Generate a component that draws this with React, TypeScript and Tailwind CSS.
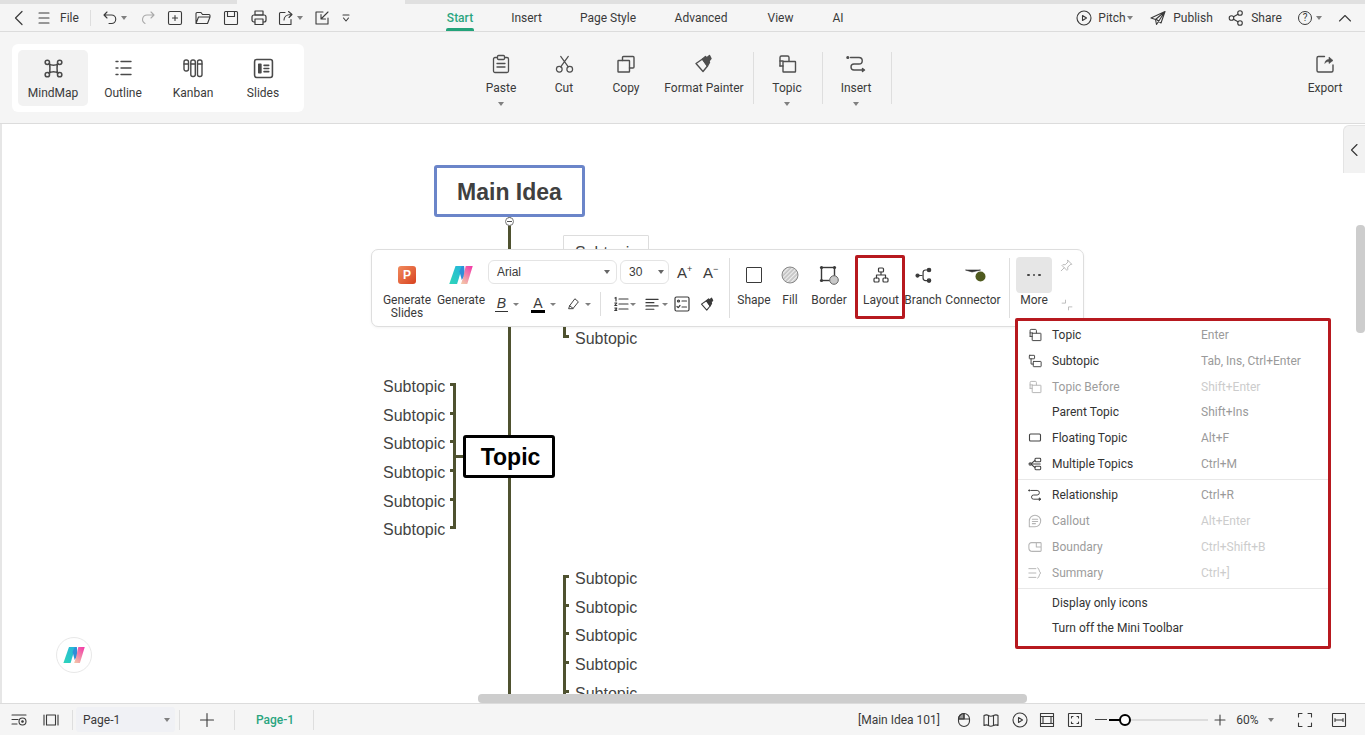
import type { ReactNode } from 'react';

const Ic = ({ size = 16, box = 16, sw = 1.1, children }: { size?: number; box?: number; sw?: number; children: ReactNode }) => (
  <svg
    width={size}
    height={size}
    viewBox={`0 0 ${box} ${box}`}
    fill="none"
    stroke="currentColor"
    strokeWidth={sw}
    strokeLinecap="round"
    strokeLinejoin="round"
    className="shrink-0"
  >
    {children}
  </svg>
);

const Caret = () => <span className="block h-0 w-0 shrink-0 border-x-[3.5px] border-t-[4px] border-x-transparent border-t-[#808080]" />;
const SmallCaret = () => <span className="block h-0 w-0 shrink-0 border-x-[3px] border-t-[3px] border-x-transparent border-t-[#808080]" />;
const SelectCaret = () => <span className="block h-0 w-0 shrink-0 border-x-[3.5px] border-t-[4px] border-x-transparent border-t-[#666666]" />;

// ribbon and mini toolbar drawings
const TopicIcon = ({ size = 20 }: { size?: number }) => (
  <Ic size={size} box={20} sw={1.4}>
    <path d="M3 12V3.500A1.500 1.500 0 0 1 4.500 2h6A1.500 1.500 0 0 1 12 3.500V7" />
    <rect x="6" y="7.500" width="12.500" height="10.500" rx="0.500" />
    <path d="M3 7h3M3 12h3" />
  </Ic>
);
const SubtopicIcon = () => (
  <Ic size={14} box={16}>
    <rect x="1.500" y="1.500" width="6" height="4" rx="0.500" />
    <rect x="6" y="8.500" width="9" height="6" rx="0.500" />
    <path d="M3.500 5.500V11.500H6" />
  </Ic>
);
const RelationIcon = ({ size = 20 }: { size?: number }) => (
  <Ic size={size} box={20} sw={1.4}>
    <circle cx="1.800" cy="3.500" r="0.900" fill="currentColor" />
    <path d="M4.500 3.500h8.500a3 3 0 0 1 0 6.500H8a3 3 0 0 0 0 6h9" />
    <path d="M16.500 14.500l2 1.500-2 1.500z" fill="currentColor" />
  </Ic>
);
const PainterIcon = ({ size = 20 }: { size?: number }) => (
  <Ic size={size} box={20} sw={1.4}>
    <path d="M2 9.500l6.500-4.500 5 7-4.500 5.500z" />
    <path d="M8.500 5l3-2.500 1 1.500 3-2.500 1.500 3-2 2.500 0.500 1.500-2 3.500z" fill="currentColor" />
  </Ic>
);
const LogoM = ({ size = 26, id }: { size?: number; id: string }) => (
  <svg width={size} height={size * 0.75} viewBox="0 0 30 23" className="shrink-0">
    <defs>
      <linearGradient id={`${id}a`} x1="0" y1="1" x2="1" y2="0">
        <stop offset="0" stopColor="#2ed6b8" />
        <stop offset="1" stopColor="#25b4dc" />
      </linearGradient>
      <linearGradient id={`${id}b`} x1="0.800" y1="0" x2="0.200" y2="1">
        <stop offset="0" stopColor="#f23fa8" />
        <stop offset="1" stopColor="#f3c4a8" />
      </linearGradient>
    </defs>
    <path d="M0 23L8 0h9L10 23z" fill={`url(#${id}a)`} />
    <path d="M13 7l3-7h3l1 12-4 6z" fill="#2f8fd8" />
    <path d="M21 0h9l-7 23h-8l3-9z" fill={`url(#${id}b)`} />
  </svg>
);

const Sep = ({ className }: { className: string }) => <div className={`w-px shrink-0 bg-[#dedede] ${className}`} />;

function TopBar() {
  return (
    <div className="flex h-[28px] shrink-0 items-center border-b border-[#dcdcdc] bg-[#f5f5f5] text-[#3a3a3a]">
      <span className="ml-[11px]"><Ic sw={1.2}><path d="M11 1.500L4.500 8l6.500 6.500" /></Ic></span>
      <span className="ml-[9px]"><Ic><path d="M3 3h10M3 8h10M3 13h10" /></Ic></span>
      <span className="ml-[8px] w-[18px]">File</span>
      <Sep className="ml-[12px] h-[16px]" />
      <span className="ml-[11px]"><Ic><path d="M5 2L2 5l3 3M2 5h7.500a4 4 0 0 1 0 8.500H7" /></Ic></span>
      <span className="ml-[3px]"><Caret /></span>
      <span className="ml-[13px] text-[#aaaaaa]"><Ic><path d="M11 2l3 3-3 3M14 5H7a4.500 4.500 0 0 0-2 8.500" /></Ic></span>
      <span className="ml-[11px]"><Ic><rect x="1.500" y="1.500" width="13" height="13" rx="1.500" /><path d="M8 5.500v5M5.500 8h5" /></Ic></span>
      <span className="ml-[12px]"><Ic><path d="M1 13V3.500A1 1 0 0 1 2 2.500h4l1.500 2H14a1 1 0 0 1 1 1v1M1 13.500h11.500l2.500-6.500H3.500L1 13.500z" /></Ic></span>
      <span className="ml-[12px]"><Ic><rect x="1.500" y="1.500" width="13" height="13" rx="1" /><path d="M4.500 1.500v5h7v-5" /></Ic></span>
      <span className="ml-[12px]"><Ic sw={1.2}><rect x="4" y="1" width="8" height="4" /><rect x="1" y="5" width="14" height="7" rx="2" /><rect x="4" y="9" width="8" height="5.500" fill="#f5f5f5" /></Ic></span>
      <span className="ml-[11px]"><Ic><path d="M7 2.500H2.500a1 1 0 0 0-1 1v10a1 1 0 0 0 1 1h10.500v-5" /><path d="M6 10c0-3 2.500-5.500 7-5.500M10.500 1.500L14 4.500l-3 3" /></Ic></span>
      <span className="ml-[3px]"><Caret /></span>
      <span className="ml-[11px]"><Ic><path d="M9 2H2v12h12V8M14 2L7.500 8.500M7 4.500v4.500h4.500" /></Ic></span>
      <span className="ml-[8px]"><Ic><path d="M5 5h6M5.500 8L8 11l2.500-3" /></Ic></span>

      <div className="relative ml-[92px] flex h-full w-[28px] items-center justify-center whitespace-nowrap font-medium text-[#2aa57f]">
        Start
        <span className="absolute bottom-0 h-[3px] w-full rounded-t-[2px] bg-[#22a37a]" />
      </div>
      <span className="ml-[38px] flex w-[29px] justify-center whitespace-nowrap">Insert</span>
      <span className="ml-[40px] flex w-[54px] justify-center whitespace-nowrap">Page Style</span>
      <span className="ml-[40px] flex w-[52px] justify-center whitespace-nowrap">Advanced</span>
      <span className="ml-[41px] flex w-[25px] justify-center whitespace-nowrap">View</span>
      <span className="ml-[40px] flex w-[10px] justify-center whitespace-nowrap">AI</span>

      <span className="ml-[233px]"><Ic><circle cx="8" cy="8" r="7" /><path d="M6.500 5.500l4 2.500-4 2.500z" /></Ic></span>
      <span className="ml-[8px] flex w-[24px] justify-center whitespace-nowrap">Pitch</span>
      <span className="ml-[3px]"><Caret /></span>
      <span className="ml-[17px]"><Ic><path d="M15 1.500L1 8l4.500 1.500 1 5L15 1.500zM15 1.500L5.500 9.500M15 1.500l-4 11.500-4.500-3.500" /></Ic></span>
      <span className="ml-[8px] flex w-[38px] justify-center whitespace-nowrap">Publish</span>
      <span className="ml-[16px]"><Ic><circle cx="3.500" cy="8" r="2.300" /><circle cx="12" cy="3" r="2.300" /><circle cx="12" cy="13" r="2.300" /><path d="M5.500 6.800l4.500-2.600M5.500 9.200l4.500 2.600" /></Ic></span>
      <span className="ml-[8px] flex w-[29px] justify-center whitespace-nowrap">Share</span>
      <span className="ml-[16px] flex h-[14px] w-[16px] items-center justify-center rounded-full">
        <span className="flex h-[14px] w-[14px] items-center justify-center rounded-full border border-[#3a3a3a] text-[10px] leading-none">?</span>
      </span>
      <span className="ml-[3px]"><Caret /></span>
      <span className="ml-[15px]"><Ic><path d="M2.500 11L8 5.500 13.500 11" /></Ic></span>
    </div>
  );
}

const ModeTab = ({ label, active, children }: { label: string; active?: boolean; children: ReactNode }) => (
  <div className={`flex h-[56px] w-[70px] flex-col items-center rounded-[5px] pt-[8px] text-[#3a3a3a] ${active ? 'bg-[#f2f2f2]' : ''}`}>
    <div className="flex h-[20px] items-center justify-center text-[#4a4a4a]">{children}</div>
    <span className="mt-[7px] leading-[16px]">{label}</span>
  </div>
);

const RibbonBtn = ({ label, width, caret, children }: { label: string; width: string; caret?: boolean; children: ReactNode }) => (
  <div className={`flex shrink-0 flex-col items-center pt-[22px] text-[#3a3a3a] ${width}`}>
    <div className="flex h-[20px] items-center justify-center text-[#4f4f4f]">{children}</div>
    <span className="mt-[6px] whitespace-nowrap leading-[16px]">{label}</span>
    {caret && <span className="mt-[6px]"><Caret /></span>}
  </div>
);

function Ribbon() {
  return (
    <div className="flex h-[92px] shrink-0 items-start border-b border-[#dcdcdc] bg-[#f5f5f5]">
      <div className="ml-[12px] mt-[12px] flex h-[68px] w-[292px] shrink-0 rounded-[6px] bg-white p-[6px]">
        <ModeTab label="MindMap" active>
          <Ic size={19} box={20} sw={1.6}>
            <circle cx="3.500" cy="3.500" r="2.300" /><circle cx="16.500" cy="3.500" r="2.300" /><circle cx="3.500" cy="16.500" r="2.300" /><circle cx="16.500" cy="16.500" r="2.300" />
            <path d="M5.500 5c2 2 7 2 9 0M5.500 15c2-2 7-2 9 0M5.500 5c1 2 1 8 0 10M14.500 5c-1 2-1 8 0 10" />
          </Ic>
        </ModeTab>
        <ModeTab label="Outline">
          <Ic size={20} box={20} sw={1.4}>
            <path d="M3 3.500h2M8 3.500h10M3 10h2M8 10h10M3 16.500h2M8 16.500h10" />
          </Ic>
        </ModeTab>
        <ModeTab label="Kanban">
          <Ic size={20} box={20} sw={1.4}>
            <rect x="1" y="2" width="4.500" height="11" rx="2" /><rect x="7.800" y="2" width="4.500" height="16.500" rx="2" /><rect x="14.500" y="2" width="4.500" height="16.500" rx="2" />
            <path d="M1 6h4.500M7.800 6h4.500M14.500 6h4.500" />
          </Ic>
        </ModeTab>
        <ModeTab label="Slides">
          <Ic size={21} box={20} sw={1.5}>
            <rect x="1.500" y="1.500" width="17" height="17" rx="2" />
            <rect x="5.500" y="6" width="2" height="8" fill="currentColor" />
            <path d="M10.500 7h4.500M10.500 13h4.500M10.500 10h4.500" />
          </Ic>
        </ModeTab>
      </div>

      <div className="ml-[166px]">
        <RibbonBtn label="Paste" width="w-[62px]" caret>
          <Ic size={20} box={20} sw={1.3}>
            <rect x="2.500" y="3.500" width="15" height="15" rx="1.500" /><rect x="6.500" y="1.500" width="7" height="4" rx="1" fill="#f5f5f5" /><path d="M6 9.500h8M6 13h8" />
          </Ic>
        </RibbonBtn>
      </div>
      <div className="ml-[1px]">
        <RibbonBtn label="Cut" width="w-[62px]">
          <Ic size={19} box={20} sw={1.3}>
            <circle cx="4.500" cy="15" r="3" /><circle cx="15.500" cy="15" r="3" /><path d="M6 12.500L14 1.500M14 12.500L6 1.500" />
          </Ic>
        </RibbonBtn>
      </div>
      <RibbonBtn label="Copy" width="w-[62px]">
        <Ic size={20} box={20} sw={1.4}>
          <rect x="2" y="6.500" width="11.500" height="11.500" rx="0.500" /><path d="M6.500 6.500V3.500a1 1 0 0 1 1-1H17a1 1 0 0 1 1 1V13a1 1 0 0 1-1 1h-3.500" />
        </Ic>
      </RibbonBtn>
      <div className="ml-[2px]">
        <RibbonBtn label="Format Painter" width="w-[90px]"><PainterIcon /></RibbonBtn>
      </div>
      <Sep className="ml-[4px] mt-[20px] h-[52px]" />
      <div className="ml-[3px]">
        <RibbonBtn label="Topic" width="w-[60px]" caret><TopicIcon /></RibbonBtn>
      </div>
      <Sep className="ml-[5px] mt-[20px] h-[52px]" />
      <div className="ml-[3px]">
        <RibbonBtn label="Insert" width="w-[60px]" caret><RelationIcon /></RibbonBtn>
      </div>
      <Sep className="ml-[5px] mt-[20px] h-[52px]" />
      <div className="ml-[403px]">
        <RibbonBtn label="Export" width="w-[60px]">
          <Ic size={20} box={20} sw={1.4}>
            <path d="M9.500 2.500H3.500a1.500 1.500 0 0 0-1.500 1.500v12.500a1.500 1.500 0 0 0 1.500 1.500h13a1.500 1.500 0 0 0 1.500-1.500V11" />
            <path d="M10 9c0-2 1.500-3.500 4-3.500V3l4 3.500-4 3V7.500c-2 0-3 .5-4 1.500z" fill="currentColor" strokeWidth="0.600" />
          </Ic>
        </RibbonBtn>
      </div>
    </div>
  );
}

const Sub = () => <span className="whitespace-nowrap font-['Liberation_Sans',sans-serif] text-[16px] text-[#444444]">Subtopic</span>;

function MindMap() {
  return (
    <>
      {/* spine */}
      <div className="absolute left-[508px] top-[93px] h-[486px] w-[3px] bg-[#4f5230]" />

      <div className="absolute left-[434px] top-[41px] flex h-[52px] w-[151px] items-center justify-center rounded-[3px] border-[3px] border-[#6b85c9] bg-white pt-[2px] font-['Liberation_Sans',sans-serif] text-[23px] font-bold text-[#404040]">
        Main Idea
      </div>
      <div className="absolute left-[505px] top-[93px] flex h-[9px] w-[9px] items-center justify-center rounded-full border border-[#777777] bg-white">
        <span className="h-px w-[5px] bg-[#555555]" />
      </div>

      {/* subtopics right of the spine, upper */}
      <div className="absolute left-[563px] top-[111px] flex h-[36px] w-[86px] items-center rounded-[1px] border border-[#dddddd] bg-white pl-[11px]">
        <Sub />
      </div>
      <div className="absolute left-[563px] top-[200px] h-[14px] w-[3px] bg-[#4f5230]" />
      <div className="absolute left-[563px] top-[211px] h-[3px] w-[6px] bg-[#4f5230]" />
      <div className="absolute left-[575px] top-[203px]"><Sub /></div>

      {/* left group */}
      <div className="absolute left-[383px] top-[246px] flex flex-col">
        {[0, 1, 2, 3, 4, 5].map((i) => (
          <div key={i} className="flex h-[28.7px] items-center">
            <span className="w-[63px] pt-[5px]"><Sub /></span>
            <span className="ml-[4px] h-[3px] w-[6px] bg-[#4f5230]" />
          </div>
        ))}
        <div className="absolute left-[70px] top-[13px] h-[145px] w-[3px] bg-[#4f5230]" />
      </div>
      <div className="absolute left-[456px] top-[331px] h-[3px] w-[8px] bg-[#4f5230]" />
      <div className="absolute left-[463px] top-[311px] flex h-[43px] w-[92px] items-center justify-center rounded-[3px] border-[3px] border-black bg-white pl-[3px] pt-[2px] font-['Liberation_Sans',sans-serif] text-[23px] font-bold text-black">
        Topic
      </div>

      {/* lower group */}
      <div className="absolute left-[563px] top-[438px] flex flex-col">
        {[0, 1, 2, 3, 4].map((i) => (
          <div key={i} className="flex h-[28.700px] items-center">
            <span className="h-[3px] w-[6px] bg-[#4f5230]" />
            <span className="ml-[6px] pt-[5px]"><Sub /></span>
          </div>
        ))}
        <div className="absolute left-0 top-[13px] h-[130px] w-[3px] bg-[#4f5230]" />
      </div>
    </>
  );
}

const ToolCol = ({ label, width, children }: { label: string; width: string; children: ReactNode }) => (
  <div className={`flex shrink-0 flex-col items-center pt-[15px] text-[#3a3a3a] ${width}`}>
    <div className="flex h-[20px] items-center justify-center">{children}</div>
    <span className="mt-[9px] whitespace-nowrap text-center leading-[13px]">{label}</span>
  </div>
);

function MiniToolbar() {
  return (
    <div className="absolute left-[371px] top-[125px] flex h-[78px] w-[713px] items-start rounded-[7px] border border-[#dedede] bg-white text-[#3a3a3a] shadow-[0_1px_3px_rgba(0,0,0,0.05)]">
      <div className="ml-[6px] flex w-[58px] shrink-0 flex-col items-center pt-[15px]">
        <div className="flex h-[20px] items-center">
          <span className="flex h-[18px] w-[18px] items-center justify-center rounded-[3px] bg-gradient-to-br from-[#f08a5d] to-[#d83f1c] font-['Liberation_Sans',sans-serif] text-[12px] font-bold text-white">P</span>
        </div>
        <span className="mt-[9px] whitespace-pre-line text-center leading-[13px]">{'Generate\nSlides'}</span>
      </div>
      <div className="flex w-[50px] shrink-0 flex-col items-center pt-[15px]">
        <div className="flex h-[20px] items-center"><LogoM size={24} id="tb" /></div>
        <span className="mt-[9px] leading-[13px]">Generate</span>
      </div>

      <div className="ml-[2px] flex w-[241px] shrink-0 flex-col pt-[10px]">
        <div className="flex h-[24px] items-center">
          <div className="flex h-[24px] w-[129px] items-center justify-between rounded-[6px] border border-[#e4e4e4] pl-[8px] pr-[6px] font-['Liberation_Sans',sans-serif]">
            Arial <SelectCaret />
          </div>
          <div className="ml-[3px] flex h-[24px] w-[49px] items-center justify-between rounded-[6px] border border-[#e4e4e4] pl-[8px] pr-[4px] font-['Liberation_Sans',sans-serif]">
            30 <SelectCaret />
          </div>
          <span className="ml-[8px] flex w-[16px] items-start font-['Liberation_Sans',sans-serif] text-[15px] leading-none">A<span className="text-[9px] leading-none">+</span></span>
          <span className="ml-[10px] flex w-[16px] items-start font-['Liberation_Sans',sans-serif] text-[15px] leading-none">A<span className="text-[9px] leading-none">−</span></span>
        </div>
        <div className="mt-[6px] flex h-[28px] items-center">
          <span className="relative ml-[7px] w-[13px] border-b border-[#333333] text-center font-['Liberation_Sans',sans-serif] text-[14px] italic leading-[15px]">B</span>
          <span className="ml-[5px]"><SmallCaret /></span>
          <span className="ml-[12px] w-[14px] border-b-[3px] border-black text-center font-['Liberation_Sans',sans-serif] text-[14px] leading-[14px]">A</span>
          <span className="ml-[5px]"><SmallCaret /></span>
          <span className="ml-[11px]"><Ic size={14}><path d="M2 13l1-3 6-8 4 3.500-6 7.500z" /><path d="M3 10l4 3" /></Ic></span>
          <span className="ml-[4px]"><SmallCaret /></span>
          <Sep className="ml-[9px] h-[24px]" />
          <span className="ml-[12px]"><Ic size={16} sw={1.2}><path d="M6 3h9M6 8h9M6 13h9M2 2l1-.5v3.500M1.800 7h2l-2 2.500h2M1.800 12h2l-1 1.200 1 1.200h-2" /></Ic></span>
          <span className="ml-[1px]"><SmallCaret /></span>
          <span className="ml-[9px]"><Ic size={15} sw={1.2}><path d="M1 2.500h13M1 6h8.500M1 9.500h13M1 13h8.500" /></Ic></span>
          <span className="ml-[2px]"><SmallCaret /></span>
          <span className="ml-[6px]"><Ic size={16} sw={1.2}><rect x="1" y="1" width="14" height="14" rx="1.500" /><circle cx="4.500" cy="5" r="1" /><path d="M8 5h4.500M3 10.500l1.200 1.200L6 9.500M8 11h4.500" /></Ic></span>
          <span className="ml-[10px]"><PainterIcon size={15} /></span>
        </div>
      </div>

      <Sep className="mt-[8px] h-[60px]" />

      <div className="ml-[4px]">
        <ToolCol label="Shape" width="w-[40px]">
          <span className="block h-[16px] w-[16px] rounded-[1px] border-[1.5px] border-[#3a3a3a]" />
        </ToolCol>
      </div>
      <ToolCol label="Fill" width="w-[32px]">
        <svg width="18" height="18" viewBox="0 0 18 18">
          <defs>
            <pattern id="hatch" width="3" height="3" patternUnits="userSpaceOnUse" patternTransform="rotate(45)">
              <rect width="3" height="3" fill="#c4c4c4" />
              <rect width="1.200" height="3" fill="#efefef" />
            </pattern>
          </defs>
          <circle cx="9" cy="9" r="8" fill="url(#hatch)" stroke="#888888" strokeWidth="1" />
        </svg>
      </ToolCol>
      <ToolCol label="Border" width="w-[46px]">
        <svg width="20" height="20" viewBox="0 0 20 20" fill="none">
          <rect x="2.500" y="2.500" width="13" height="13" stroke="#3a3a3a" strokeWidth="1.400" />
          <circle cx="2.500" cy="2.500" r="1.600" fill="#3a3a3a" /><circle cx="15.500" cy="2.500" r="1.600" fill="#3a3a3a" /><circle cx="2.500" cy="15.500" r="1.600" fill="#3a3a3a" />
          <circle cx="15" cy="15" r="4.300" fill="#c8c8c8" stroke="#666666" />
        </svg>
      </ToolCol>

      <div className="ml-[3px] mt-[5px] flex h-[64px] w-[50px] shrink-0 flex-col items-center rounded-[2px] border-[3px] border-[#b7191f] pl-[2px] pt-[7px]">
        <div className="flex h-[20px] items-center">
          <Ic size={16} sw={1.2}>
            <rect x="5.500" y="1" width="5" height="4" rx="1" /><rect x="1" y="11" width="5" height="4" rx="1" /><rect x="10" y="11" width="5" height="4" rx="1" />
            <path d="M8 5v3M3.500 11V8h9v3" />
          </Ic>
        </div>
        <span className="mt-[9px] whitespace-nowrap leading-[13px]">Layout</span>
      </div>

      <ToolCol label="Branch" width="w-[36px]">
        <Ic size={17} box={20} sw={1.4}>
          <circle cx="3" cy="10" r="1.800" fill="currentColor" /><circle cx="16.500" cy="3.500" r="2" fill="currentColor" /><circle cx="16.500" cy="16" r="2" fill="currentColor" />
          <path d="M3 10h5M15 3.500h-2.500a3 3 0 0 0-3 3v6.500a3 3 0 0 0 3 3H15" />
        </Ic>
      </ToolCol>
      <ToolCol label="Connector" width="w-[64px]">
        <svg width="21" height="14" viewBox="0 0 21 14" className="translate-x-[2px]">
          <path d="M0.500 2h15L7 4z" fill="#333333" stroke="#333333" strokeWidth="0.600" />
          <circle cx="15.500" cy="8.500" r="5" fill="#4f5a1e" />
        </svg>
      </ToolCol>

      <Sep className="ml-[4px] mt-[8px] h-[60px]" />

      <div className="ml-[6px] flex w-[36px] shrink-0 flex-col items-center pt-[7px]">
        <div className="flex h-[36px] w-[36px] items-center justify-center gap-[3px] rounded-[4px] bg-[#e6e6e6]">
          <span className="h-[2.500px] w-[2.500px] rounded-full bg-[#444444]" />
          <span className="h-[2.500px] w-[2.500px] rounded-full bg-[#444444]" />
          <span className="h-[2.500px] w-[2.500px] rounded-full bg-[#444444]" />
        </div>
        <span className="mt-[1px] leading-[13px]">More</span>
      </div>

      <div className="ml-[8px] flex flex-col items-center pt-[9px] text-[#aaaaaa]">
        <Ic size={13} sw={1}><path d="M9.500 1.500l5 5-2 .5-3 3 0 3-1 1-6-6 1-1 3 0 3-3zM5 11l-3.500 3.500" /></Ic>
        <span className="mt-[27px]"><Ic size={12} sw={1}><path d="M6 1.500V5.500H1.500M10 14.500V10.500H14.500" /></Ic></span>
      </div>
    </div>
  );
}

const MenuRow = ({ label, keys, off, h, children }: { label: string; keys?: string; off?: boolean; h: string; children?: ReactNode }) => (
  <div className={`flex items-center ${h}`}>
    <span className={`ml-[9px] flex w-[16px] justify-center ${off ? 'text-[#b5b5b5]' : 'text-[#444444]'}`}>{children}</span>
    <span className={`ml-[9px] w-[149px] whitespace-nowrap ${off ? 'text-[#9c9c9c]' : 'text-[#333333]'}`}>{label}</span>
    {keys && <span className={`whitespace-nowrap ${off ? 'text-[#cccccc]' : 'text-[#9a9a9a]'}`}>{keys}</span>}
  </div>
);

function ContextMenu() {
  return (
    <div className="absolute left-[1015px] top-[194px] h-[331px] w-[316px] rounded-[2px] border-[3px] border-[#b7191f] bg-white pt-[1.500px]">
      <MenuRow label="Topic" keys="Enter" h="h-[25.700px]"><TopicIcon size={14} /></MenuRow>
      <MenuRow label="Subtopic" keys="Tab, Ins, Ctrl+Enter" h="h-[25.700px]"><SubtopicIcon /></MenuRow>
      <MenuRow label="Topic Before" keys="Shift+Enter" off h="h-[25.700px]"><TopicIcon size={14} /></MenuRow>
      <MenuRow label="Parent Topic" keys="Shift+Ins" h="h-[25.700px]" />
      <MenuRow label="Floating Topic" keys="Alt+F" h="h-[25.700px]">
        <Ic size={14} box={14}><rect x="1.500" y="3" width="11" height="7" rx="1" /></Ic>
      </MenuRow>
      <MenuRow label="Multiple Topics" keys="Ctrl+M" h="h-[25.700px]">
        <Ic size={14} box={16} sw={1.200}>
          <rect x="8" y="1.500" width="6.500" height="4" rx="1" /><rect x="8" y="10.500" width="6.500" height="4" rx="1" /><circle cx="2.500" cy="8" r="1.300" />
          <path d="M3.500 7.500L8 4M3.500 8.500L8 12M4 8h10" />
        </Ic>
      </MenuRow>
      <div className="mt-[2px] h-px bg-[#e8e8e8]" />
      <div className="mt-[2px]" />
      <MenuRow label="Relationship" keys="Ctrl+R" h="h-[26px]"><RelationIcon size={14} /></MenuRow>
      <MenuRow label="Callout" keys="Alt+Enter" off h="h-[26px]">
        <Ic size={14} box={16} sw={1.200}><path d="M8 1.500a6.500 6.500 0 0 1 0 13H1.500V8A6.500 6.500 0 0 1 8 1.500zM5 6h6M5 8.500h6M5 11h3.500" /></Ic>
      </MenuRow>
      <MenuRow label="Boundary" keys="Ctrl+Shift+B" off h="h-[26px]">
        <Ic size={14} box={16} sw={1.200}><path d="M4 3h10a1 1 0 0 1 1 1v8a1 1 0 0 1-1 1H5a4 4 0 0 1-4-4V6a3 3 0 0 1 3-3zM9.500 3v5H15" /></Ic>
      </MenuRow>
      <MenuRow label="Summary" keys="Ctrl+]" off h="h-[26px]">
        <Ic size={14} box={16} sw={1.100}><path d="M1 3h8M1 8h8M1 13h8M11 2c2 0 1.500 5 3.500 6-2 1-1.500 6-3.500 6" /></Ic>
      </MenuRow>
      <div className="mt-[2px] h-px bg-[#e8e8e8]" />
      <div className="mt-[2px]" />
      <MenuRow label="Display only icons" h="h-[25px]" />
      <MenuRow label="Turn off the Mini Toolbar" h="h-[25px]" />
    </div>
  );
}

function Canvas() {
  return (
    <div className="relative flex-1 overflow-hidden bg-white">
      <div className="absolute inset-y-0 left-0 w-[2px] bg-[#e6e6e6]" />
      <MindMap />
      <MiniToolbar />
      <ContextMenu />

      <div className="absolute right-0 top-[1px] flex h-[48px] w-[22px] items-center justify-center rounded-tl-[6px] border-l border-t border-[#e4e4e4] bg-[#f2f2f2] text-[#333333]">
        <Ic><path d="M10 2.500L4.500 8l5.500 5.500" /></Ic>
      </div>
      <div className="absolute right-0 top-[101px] h-[108px] w-[9px] rounded-[4px] bg-[#cdcdcd]" />

      {/* horizontal scrollbar strip */}
      <div className="absolute inset-x-[2px] bottom-0 h-[9px] bg-white">
        <div className="absolute left-[476px] h-[9px] w-[549px] rounded-[4px] bg-[#cdcdcd]" />
      </div>

      <div className="absolute left-[56px] top-[513px] flex h-[36px] w-[36px] items-center justify-center rounded-full border border-[#e8e8e8] bg-white">
        <LogoM size={22} id="fab" />
      </div>
    </div>
  );
}

function StatusBar() {
  return (
    <div className="flex h-[32px] shrink-0 items-center border-t border-[#dcdcdc] bg-[#f5f5f5] text-[#3a3a3a]">
      <span className="ml-[11px]"><Ic><path d="M1 3h14M1 7.500h6M1 12h5" /><circle cx="11.500" cy="9.500" r="3.500" /><circle cx="11.500" cy="9.500" r="0.800" fill="currentColor" /></Ic></span>
      <span className="ml-[16px]"><Ic><path d="M1 3v10M15 3v10" /><rect x="3.500" y="3" width="9" height="10" /></Ic></span>
      <Sep className="ml-[13px] h-[20px] bg-[#d8d8d8]" />
      <div className="ml-[3px] flex h-[25px] w-[99px] items-center justify-between rounded-[3px] bg-[#f0f1f5] pl-[7px] pr-[5px]">
        Page-1 <Caret />
      </div>
      <Sep className="ml-[4px] h-[20px] bg-[#d8d8d8]" />
      <span className="ml-[19px]"><Ic><path d="M8 1.500v13M1.500 8h13" /></Ic></span>
      <Sep className="ml-[19px] h-[20px] bg-[#d8d8d8]" />
      <span className="ml-[21px] flex w-[38px] justify-center whitespace-nowrap font-medium text-[#2aa57f]">Page-1</span>
      <Sep className="ml-[19px] h-[20px] bg-[#d8d8d8]" />

      <span className="ml-[545px] flex w-[80px] justify-center whitespace-nowrap">[Main Idea 101]</span>
      <span className="ml-[17px]"><Ic><rect x="2.500" y="1.500" width="11" height="13" rx="5.500" /><path d="M2.500 7h11M8 1.500V7" /><path d="M8 1.500a5.500 5.500 0 0 0-5.500 5.500H8z" fill="currentColor" fillOpacity="0.500" /></Ic></span>
      <span className="ml-[11px]"><Ic><path d="M1 3.500c2-1 3-1 4.500 0s3 1 5 0 3-1 4.500 0v10c-1.500-1-2.500-1-4.500 0s-3.500 1-5 0-2.500-1-4.500 0zM5.500 3.500v10M10.500 3.500v10" /></Ic></span>
      <span className="ml-[13px]"><Ic><circle cx="8" cy="8" r="7" /><path d="M6.500 5.500l4 2.500-4 2.500z" /></Ic></span>
      <span className="ml-[11px]"><Ic><rect x="1.500" y="1.500" width="13" height="13" /><rect x="4" y="4.500" width="8" height="7" /><path d="M1.500 4.500H4M12 4.500h2.500M1.500 11.500H4M12 11.500h2.500" /></Ic></span>
      <span className="ml-[12px]"><Ic><rect x="1.500" y="1.500" width="13" height="13" rx="0.500" /><path d="M4.500 6V4.500H6M10 4.500h1.500V6M4.500 10v1.500H6M10 11.500h1.500V10" /></Ic></span>
      <span className="ml-[12px] h-px w-[12px] bg-[#444444]" />
      <div className="relative ml-[2px] h-[2px] w-[99px] bg-[#dddddd]">
        <div className="h-full w-[16px] bg-black" />
        <span className="absolute left-[10px] top-[-5px] h-[12px] w-[12px] rounded-full border-[2.500px] border-black bg-white" />
      </div>
      <span className="ml-[6px] text-[#444444]"><Ic size={12} box={12}><path d="M6 1v10M1 6h10" /></Ic></span>
      <span className="ml-[11px] flex w-[21px] justify-center whitespace-nowrap">60%</span>
      <span className="ml-[10px]"><Caret /></span>
      <span className="ml-[23px]"><Ic><path d="M1.500 5V1.500H5M11 1.500h3.500V5M1.500 11v3.500H5M11 14.500h3.500V11" /></Ic></span>
      <span className="ml-[18px]"><Ic><rect x="1.500" y="1.500" width="13" height="13" rx="0.500" /><path d="M4 8h8M4 6.500v3M12 6.500v3" /></Ic></span>
    </div>
  );
}

export default function App() {
  return (
    <div className="flex h-[735px] w-[1365px] flex-col overflow-hidden bg-white font-['Roboto',sans-serif] text-[12px]">
      <div className="flex h-[4px] shrink-0 bg-[#e0e0e0]">
        <div className="ml-[237px] w-[168px] bg-[#f5f5f5]" />
      </div>
      <TopBar />
      <Ribbon />
      <Canvas />
      <StatusBar />
    </div>
  );
}
